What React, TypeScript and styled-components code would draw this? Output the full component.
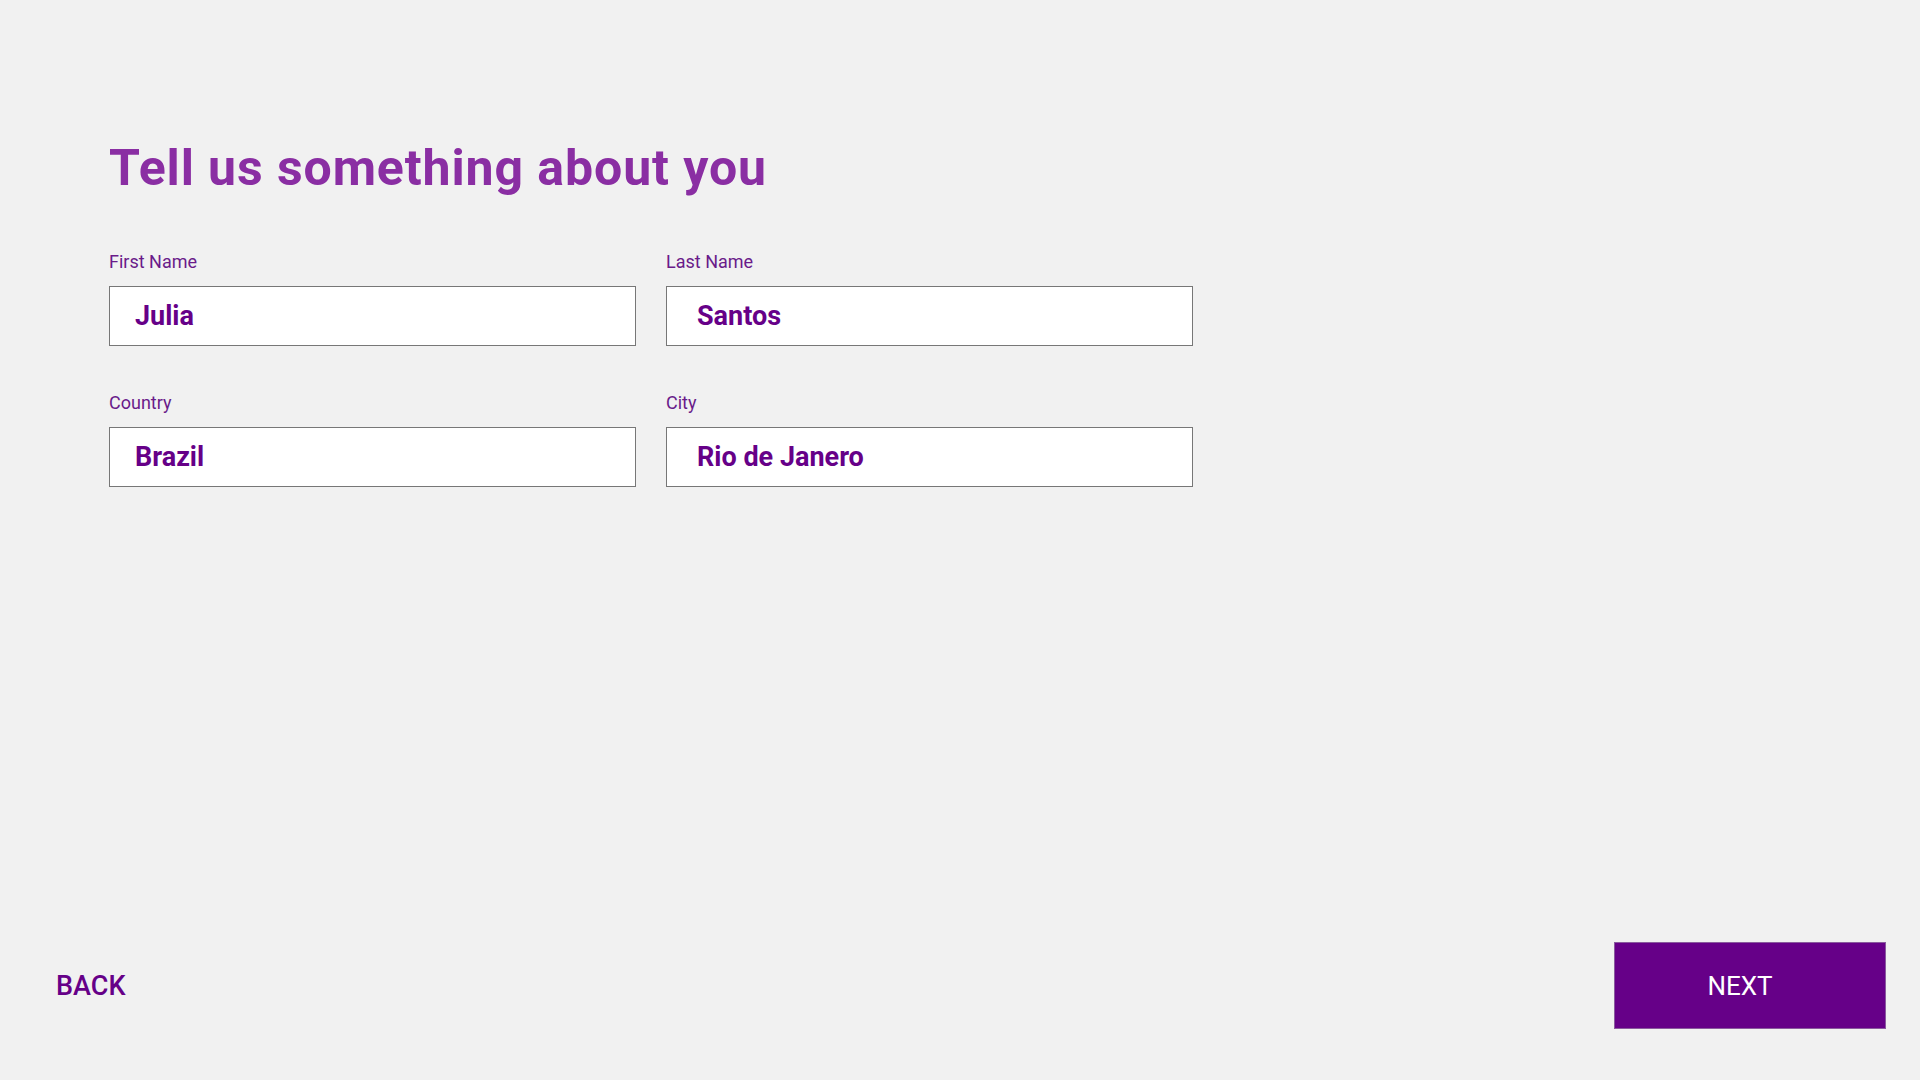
import React from "react";
import styled, { createGlobalStyle } from "styled-components";

const Global = createGlobalStyle`
  html, body { margin: 0; padding: 0; background: #f1f1f1; }
  * { box-sizing: border-box; }
`;

const Page = styled.div`
  width: 1920px;
  height: 1080px;
  display: flex;
  flex-direction: column;
  background: #f1f1f1;
`;

const Main = styled.main`
  padding: 138px 0 0 109px;
`;

const Title = styled.h1`
  margin: 0 0 53px 0;
  font-family: "Roboto", "Liberation Sans", sans-serif;
  font-weight: 700;
  font-size: 50px;
  line-height: 60px;
  letter-spacing: 0.9px;
  color: #8a2ea3;
`;

const Grid = styled.div`
  display: grid;
  grid-template-columns: 527px 527px;
  column-gap: 30px;
  row-gap: 46px;
`;

const Field = styled.label`
  display: flex;
  flex-direction: column;
  gap: 13px;
`;

const Label = styled.span`
  font-family: "Roboto", "Liberation Sans", sans-serif;
  font-weight: 400;
  font-size: 18px;
  line-height: 22px;
  color: #6a1b8a;
`;

const Input = styled.input<{ $pad: number }>`
  width: 100%;
  height: 60px;
  border: 1px solid #777777;
  background: #ffffff;
  padding: 0 0 0 ${(p) => p.$pad}px;
  font-family: "Roboto", "Liberation Sans", sans-serif;
  font-weight: 700;
  font-size: 27px;
  color: #660088;
  outline: none;
  border-radius: 0;
`;

const Footer = styled.footer`
  margin-top: auto;
  display: flex;
  justify-content: space-between;
  align-items: center;
  padding: 0 34px 51px 56px;
`;

const BackButton = styled.button`
  background: none;
  border: none;
  padding: 0;
  font-family: "Roboto", "Liberation Sans", sans-serif;
  font-weight: 500;
  font-size: 27px;
  color: #660088;
  cursor: pointer;
`;

const NextButton = styled.button`
  width: 272px;
  height: 87px;
  padding: 0 20px 0 0;
  background: #660088;
  border: 1px solid #8a5a9e;
  color: #ffffff;
  font-family: "Roboto", "Liberation Sans", sans-serif;
  font-weight: 400;
  font-size: 26px;
  cursor: pointer;
`;

const fields = [
  { label: "First Name", value: "Julia", pad: 25 },
  { label: "Last Name", value: "Santos", pad: 30 },
  { label: "Country", value: "Brazil", pad: 25 },
  { label: "City", value: "Rio de Janero", pad: 30 },
];

export default function App() {
  return (
    <Page>
      <Global />
      <Main>
        <Title>Tell us something about you</Title>
        <Grid>
          {fields.map((f) => (
            <Field key={f.label}>
              <Label>{f.label}</Label>
              <Input $pad={f.pad} defaultValue={f.value} />
            </Field>
          ))}
        </Grid>
      </Main>
      <Footer>
        <BackButton>BACK</BackButton>
        <NextButton>NEXT</NextButton>
      </Footer>
    </Page>
  );
}
